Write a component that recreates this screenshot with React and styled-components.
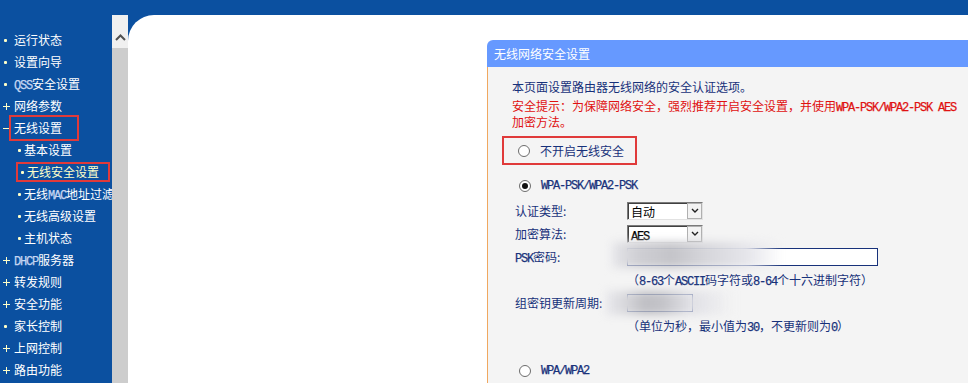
import styled, { createGlobalStyle, css } from "styled-components";

const blue = "#0b50a0";
const navy = "#17317a";
const red = "#e01010";
const mono = `"Liberation Mono", "DejaVu Sans Mono", monospace`;

const GlobalStyle = createGlobalStyle`
  html, body {
    margin: 0;
    padding: 0;
    height: 100%;
    overflow: hidden;
    background: ${blue};
  }
  #root {
    height: 100%;
  }
`;

const Page = styled.div`
  height: 100vh;
  display: flex;
  flex-direction: column;
  background: ${blue};
  font-family: "Noto Sans CJK SC", "Noto Sans", sans-serif;
  font-size: 12px;
`;

const TopBar = styled.div`
  height: 15px;
  flex-shrink: 0;
`;

const Frame = styled.div`
  flex: 1;
  display: flex;
  min-height: 0;
`;

/* ---------- left menu ---------- */

const Sidebar = styled.nav`
  width: 112px;
  flex-shrink: 0;
  overflow: hidden;
  padding-top: 14px;
  box-sizing: border-box;
`;

const NavItem = styled.div`
  display: flex;
  align-items: center;
  height: 22px;
  padding-left: ${(p) => (p.$sub ? "16px" : "3px")};
  color: ${(p) => (p.$active ? "#ffffc8" : "#ffffff")};
  white-space: nowrap;
  line-height: 16px;
`;

const Marker = styled.span`
  position: relative;
  flex-shrink: 0;
  width: ${(p) => (p.$sub ? "8px" : "11px")};
  height: 16px;

  &::before,
  &::after {
    content: "";
    position: absolute;
    background: #ffffc8;
  }

  ${(p) =>
    p.$kind === "dot" &&
    css`
      &::before {
        left: ${p.$sub ? "2px" : "1px"};
        top: 7px;
        width: 3px;
        height: 3px;
        border-radius: 1px;
      }
      &::after {
        display: none;
      }
    `}

  ${(p) =>
    p.$kind === "plus" &&
    css`
      &::before {
        left: 0;
        top: 8px;
        width: 7px;
        height: 1px;
      }
      &::after {
        left: 3px;
        top: 5px;
        width: 1px;
        height: 7px;
      }
    `}

  ${(p) =>
    p.$kind === "minus" &&
    css`
      &::before {
        left: 0;
        top: 8px;
        width: 6px;
        height: 1px;
      }
      &::after {
        display: none;
      }
    `}
`;

const Mark = styled.span`
  display: inline-flex;
  align-items: center;
  border: 2px solid #e03a3a;
  padding: ${(p) => p.$pad};
  margin-left: ${(p) => p.$shift || 0};
  line-height: 16px;
`;

const Latin = styled.span`
  font-family: ${mono};
  font-size: 12px;
  letter-spacing: -1.2px;
  line-height: 10px;
  -webkit-text-stroke: 0.25px currentColor;
  color: ${(p) => p.$color || "inherit"};
`;

/* ---------- scrollbar ---------- */

const Scrollbar = styled.div`
  width: 16px;
  flex-shrink: 0;
  display: flex;
  flex-direction: column;
`;

const ScrollUp = styled.div`
  height: 33px;
  background: #f0f0f0;
  display: flex;
  align-items: flex-end;
  justify-content: center;
  padding-bottom: 7px;
  box-sizing: border-box;
`;

const ScrollTrack = styled.div`
  flex: 1;
  background: #cdcdcd;
`;

/* ---------- main content ---------- */

const Main = styled.main`
  flex: 1;
  min-width: 0;
  background: #ffffff;
  border-top-left-radius: 26px;
  overflow: hidden;
  padding: 25px 0 0 359px;
  display: flex;
  flex-direction: column;
`;

const Panel = styled.section`
  flex: 1;
  display: flex;
  flex-direction: column;
`;

const PanelHeader = styled.header`
  height: 27px;
  flex-shrink: 0;
  background: #6699ff;
  color: #ffffff;
  border-top-left-radius: 6px;
  display: flex;
  align-items: center;
  padding-left: 7px;
`;

const PanelBody = styled.div`
  flex: 1;
  background: #f4f4f4;
  border-left: 1px solid #f0a860;
  padding: 11px 0 0 24px;
  color: ${navy};
  white-space: nowrap;
`;

const Para = styled.div`
  line-height: ${(p) => (p.$warn ? "16px" : "17px")};
  color: ${(p) => (p.$warn ? red : navy)};
  margin-top: ${(p) => p.$top || 0};
`;

const RadioRow = styled.div`
  display: flex;
  align-items: center;
  gap: 10px;
  height: 20px;
  padding-left: 7px;
  margin-top: ${(p) => p.$top || 0};
`;

const BoxedRadioRow = styled.div`
  display: flex;
  width: fit-content;
  align-items: center;
  gap: 10px;
  height: 25px;
  margin: 6px 0 0 -10px;
  padding: 0 11px 0 14px;
  border: 2px solid #e03a3a;
`;

const Radio = styled.span`
  position: relative;
  width: 12px;
  height: 12px;
  box-sizing: border-box;
  border-radius: 50%;
  border: 1px solid #6c6c6c;
  background: #ffffff;

  ${(p) =>
    p.$checked &&
    css`
      &::after {
        content: "";
        position: absolute;
        left: 2px;
        top: 2px;
        width: 6px;
        height: 6px;
        border-radius: 50%;
        background: #111111;
      }
    `}
`;

const Form = styled.div`
  display: grid;
  grid-template-columns: 115px auto;
  grid-auto-rows: 23px;
  align-items: center;
  margin-top: 3px;
`;

const Label = styled.div`
  padding-left: 3px;
`;

const Hint = styled.div`
  grid-column: 2;
`;

const Select = styled.div`
  display: flex;
  width: 76px;
  height: 18px;
  box-sizing: border-box;
  border: 1px solid;
  border-color: #7a7a7a #e2e2e2 #e2e2e2 #7a7a7a;
  box-shadow: inset 1px 1px 0 #404040;
  background: #ffffff;
  color: #000000;
`;

const SelectValue = styled.span`
  flex: 1;
  padding: 1px 0 0 3px;
  line-height: 15px;
`;

const SelectArrow = styled.span`
  width: 15px;
  box-sizing: border-box;
  border: 1px solid #b0b0b0;
  background: #f3f3f3;
  display: flex;
  align-items: center;
  justify-content: center;
`;

const TextBox = styled.div`
  position: relative;
  width: ${(p) => p.$width};
  height: 18px;
  box-sizing: border-box;
  border: 1px solid ${navy};
  background: #ffffff;
`;

const Smudge = styled.div`
  position: absolute;
  left: ${(p) => p.$left};
  top: ${(p) => p.$top};
  width: ${(p) => p.$width};
  height: ${(p) => p.$height};
  background: ${(p) => p.$bg};
  filter: blur(4px);
  pointer-events: none;
`;

const Chevron = ({ up }) => (
  <svg width={up ? 11 : 8} height={up ? 7 : 5} viewBox={up ? "0 0 11 7" : "0 0 8 5"}>
    <path
      d={up ? "M1 6 L5.5 1.5 L10 6" : "M1 1 L4 4 L7 1"}
      fill="none"
      stroke={up ? "#505050" : "#202020"}
      strokeWidth={up ? 2 : 1.4}
    />
  </svg>
);

const menu = [
  { kind: "dot", text: "运行状态" },
  { kind: "dot", text: "设置向导" },
  { kind: "dot", latin: "QSS", text: "安全设置" },
  { kind: "plus", text: "网络参数" },
  { kind: "minus", text: "无线设置", boxed: "text" },
  { kind: "dot", sub: true, text: "基本设置" },
  { kind: "dot", sub: true, text: "无线安全设置", boxed: "row", active: true },
  { kind: "dot", sub: true, text: "无线", latin: "MAC", after: "地址过滤" },
  { kind: "dot", sub: true, text: "无线高级设置" },
  { kind: "dot", sub: true, text: "主机状态" },
  { kind: "plus", latin: "DHCP", text: "服务器" },
  { kind: "plus", text: "转发规则" },
  { kind: "plus", text: "安全功能" },
  { kind: "dot", text: "家长控制" },
  { kind: "plus", text: "上网控制" },
  { kind: "plus", text: "路由功能" },
];

const MenuLabel = ({ item }) => {
  if (item.after) {
    return (
      <span>
        {item.text}
        <Latin $color="#c6d6f2">{item.latin}</Latin>
        {item.after}
      </span>
    );
  }
  return (
    <span>
      {item.latin && <Latin $color="#c6d6f2">{item.latin}</Latin>}
      {item.text}
    </span>
  );
};

const MenuRow = ({ item }) => {
  const marker = <Marker $kind={item.kind} $sub={item.sub} />;
  if (item.boxed === "row") {
    return (
      <NavItem $sub $active={item.active}>
        <Mark $pad="0 9px 0 1px">
          {marker}
          <MenuLabel item={item} />
        </Mark>
      </NavItem>
    );
  }
  if (item.boxed === "text") {
    return (
      <NavItem>
        {marker}
        <Mark $pad="3px 15px 3px 3px" $shift="-5px">
          <MenuLabel item={item} />
        </Mark>
      </NavItem>
    );
  }
  return (
    <NavItem $sub={item.sub} $active={item.active}>
      {marker}
      <MenuLabel item={item} />
    </NavItem>
  );
};

export default function App() {
  return (
    <Page>
      <GlobalStyle />
      <TopBar />
      <Frame>
        <Sidebar>
          {menu.map((item, i) => (
            <MenuRow key={i} item={item} />
          ))}
        </Sidebar>
        <Scrollbar>
          <ScrollUp>
            <Chevron up />
          </ScrollUp>
          <ScrollTrack />
        </Scrollbar>
        <Main>
          <Panel>
            <PanelHeader>无线网络安全设置</PanelHeader>
            <PanelBody>
              <Para>本页面设置路由器无线网络的安全认证选项。</Para>
              <Para $warn $top="3px">
                安全提示：为保障网络安全，强烈推荐开启安全设置，并使用
                <Latin>WPA-PSK/WPA2-PSK AES</Latin>
                <br />
                加密方法。
              </Para>

              <BoxedRadioRow>
                <Radio />
                <span>不开启无线安全</span>
              </BoxedRadioRow>

              <RadioRow $top="11px">
                <Radio $checked />
                <Latin>WPA-PSK/WPA2-PSK</Latin>
              </RadioRow>

              <Form>
                <Label>认证类型:</Label>
                <Select>
                  <SelectValue>自动</SelectValue>
                  <SelectArrow>
                    <Chevron />
                  </SelectArrow>
                </Select>

                <Label>加密算法:</Label>
                <Select>
                  <SelectValue>
                    <Latin>AES</Latin>
                  </SelectValue>
                  <SelectArrow>
                    <Chevron />
                  </SelectArrow>
                </Select>

                <Label>
                  <Latin>PSK</Latin>密码:
                </Label>
                <TextBox $width="251px">
                  <Smudge
                    $left="-16px"
                    $top="-7px"
                    $width="170px"
                    $height="26px"
                    $bg="linear-gradient(90deg, #e6e6ea 0%, #cfcfd4 15%, #c4c4c9 35%, #d6d6db 55%, #e6e6eb 80%, rgba(240,240,244,0) 100%)"
                  />
                </TextBox>
                <Hint>
                  （<Latin>8-63</Latin>个<Latin>ASCII</Latin>码字符或
                  <Latin>8-64</Latin>个十六进制字符）
                </Hint>

                <Label>组密钥更新周期:</Label>
                <TextBox $width="66px">
                  <Smudge
                    $left="-22px"
                    $top="-4px"
                    $width="128px"
                    $height="24px"
                    $bg="linear-gradient(90deg, #e8e8ec 0%, #d8d8dc 15%, #bfbfc4 30%, #c4c4c9 45%, #e0e0e5 65%, rgba(240,240,244,0) 100%)"
                  />
                </TextBox>
                <Hint>
                  （单位为秒，最小值为<Latin>30</Latin>，不更新则为
                  <Latin>0</Latin>）
                </Hint>
              </Form>

              <RadioRow $top="24px">
                <Radio />
                <Latin>WPA/WPA2</Latin>
              </RadioRow>
            </PanelBody>
          </Panel>
        </Main>
      </Frame>
    </Page>
  );
}
